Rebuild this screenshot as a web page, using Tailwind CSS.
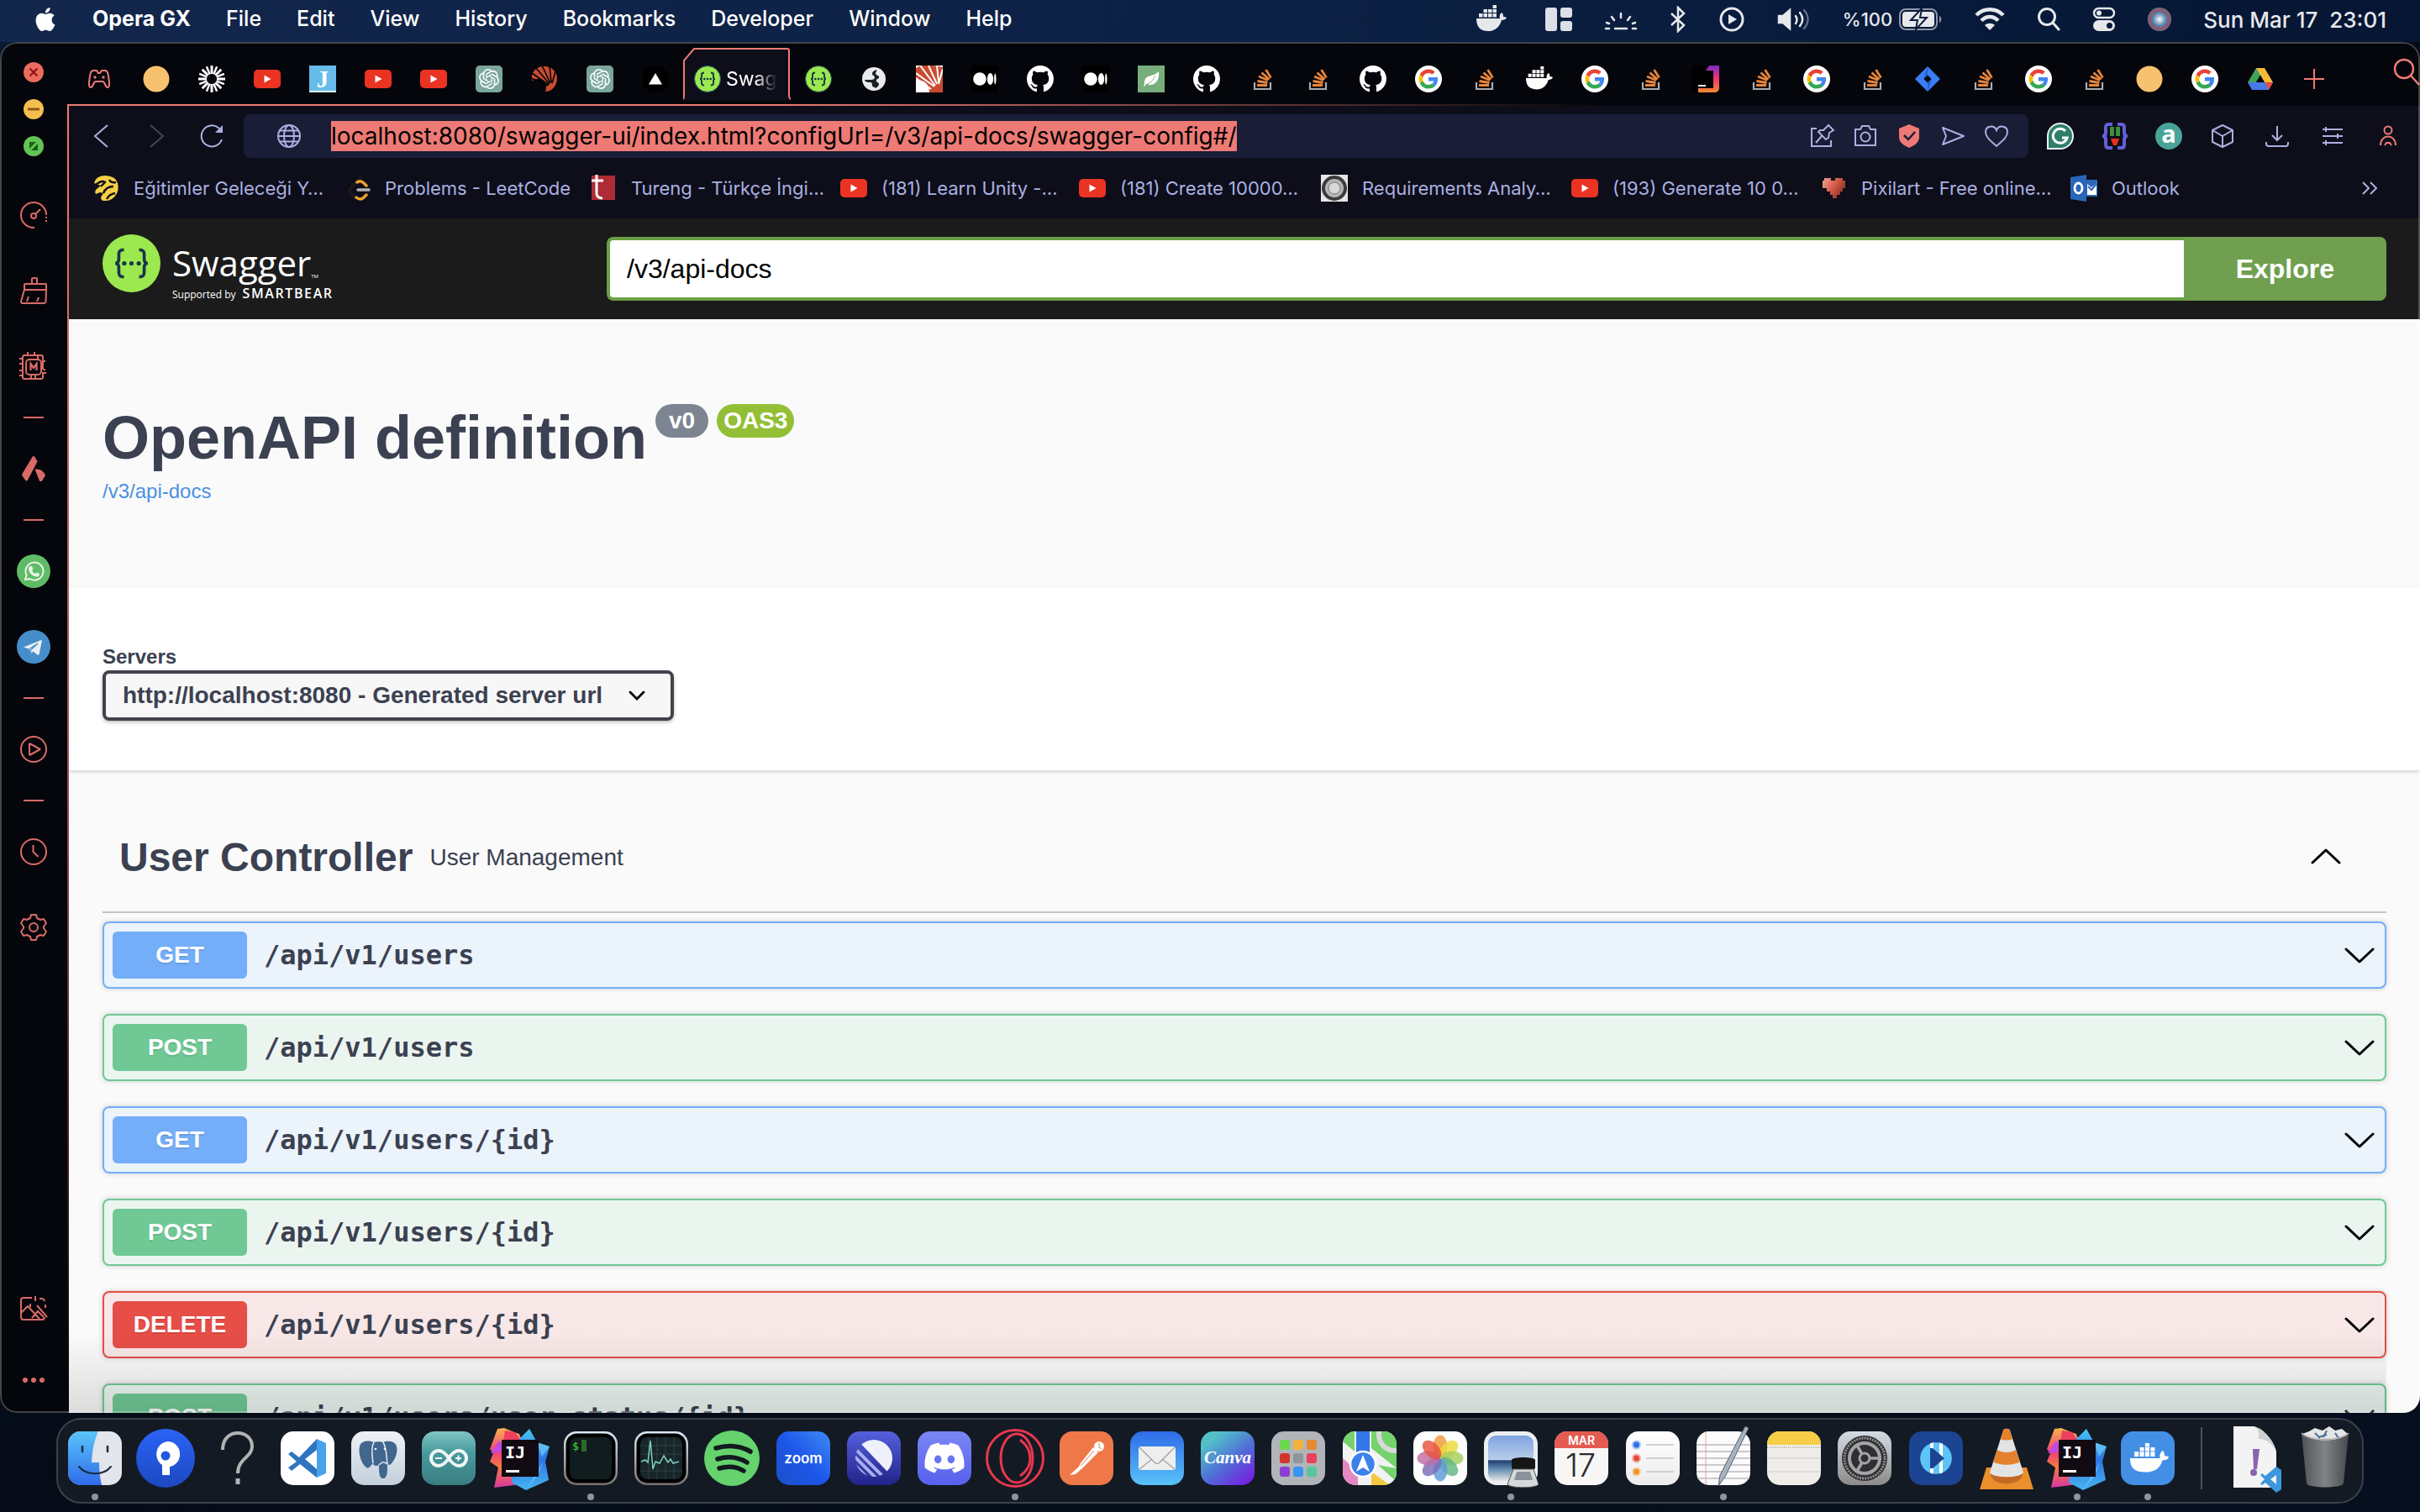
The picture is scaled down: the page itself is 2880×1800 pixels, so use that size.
<!DOCTYPE html>
<html lang="en">
<head>
<meta charset="utf-8">
<title>Swagger UI</title>
<script src="https://cdn.jsdelivr.net/npm/@tailwindcss/browser@4"></script>
</head>
<body class="flex h-screen flex-col overflow-hidden bg-gradient-to-br from-[#0a1c33] via-[#050c18] to-[#060f1e] font-[Inter,sans-serif]">

<svg class="absolute h-0 w-0" aria-hidden="true">
<defs>
<linearGradient id="gBlue" x2="0" y2="1"><stop stop-color="#5ac4fa"/><stop offset="1" stop-color="#2f6bea"/></linearGradient>
<linearGradient id="gMail" x2="0" y2="1"><stop stop-color="#2f6be8"/><stop offset="1" stop-color="#5ac3f8"/></linearGradient>
<linearGradient id="gSource" x2="0" y2="1"><stop stop-color="#2a63f6"/><stop offset="1" stop-color="#1d49c0"/></linearGradient>
<linearGradient id="gZoom" x1="1" x2="0" y2="1"><stop stop-color="#3f8af4"/><stop offset=".5" stop-color="#1d57ea"/><stop offset="1" stop-color="#1c4fc8"/></linearGradient>
<linearGradient id="gPale" x2="0" y2="1"><stop stop-color="#eef2f6"/><stop offset="1" stop-color="#c3cfdb"/></linearGradient>
<linearGradient id="gTeal" x2="0" y2="1"><stop stop-color="#82c4c4"/><stop offset=".4" stop-color="#469a9d"/><stop offset="1" stop-color="#3a7d80"/></linearGradient>
<linearGradient id="gRim" x2="0" y2="1"><stop stop-color="#dde9f7"/><stop offset="1" stop-color="#76716f"/></linearGradient>
<linearGradient id="gLinear" x2="0" y2="1"><stop stop-color="#5560dd"/><stop offset="1" stop-color="#22238a"/></linearGradient>
<linearGradient id="gDisc" x2="0" y2="1"><stop stop-color="#7b86f5"/><stop offset="1" stop-color="#5661ee"/></linearGradient>
<linearGradient id="gCanva" x2=".8" y2="1"><stop offset=".2" stop-color="#52bfc9"/><stop offset=".6" stop-color="#4f6fd6"/><stop offset="1" stop-color="#7422e0"/></linearGradient>
<linearGradient id="gIjL" x2="0" y2="1"><stop stop-color="#f9b34b"/><stop offset=".4" stop-color="#ee3f7e"/><stop offset=".65" stop-color="#f57c3a"/><stop offset="1" stop-color="#d736a6"/></linearGradient>
<linearGradient id="gIjR" x2="0" y2="1"><stop stop-color="#47c6f2"/><stop offset=".5" stop-color="#2e74e4"/><stop offset="1" stop-color="#45b5f0"/></linearGradient>
<linearGradient id="gPaper" x2="0" y2="1"><stop stop-color="#fff"/><stop offset="1" stop-color="#ececec"/></linearGradient>
<linearGradient id="gGear" x2="0" y2="1"><stop stop-color="#d3dbe3"/><stop offset="1" stop-color="#8d8b89"/></linearGradient>
<linearGradient id="gTrash" x2="1" y2="0"><stop stop-color="#55585b"/><stop offset=".5" stop-color="#8d9092"/><stop offset="1" stop-color="#4b4d50"/></linearGradient>
<linearGradient id="gSea" x2="0" y2="1"><stop stop-color="#7ea4df"/><stop offset=".54" stop-color="#b9cdec"/><stop offset=".55" stop-color="#1f3b6e"/><stop offset=".72" stop-color="#5b86ad"/><stop offset="1" stop-color="#e3e6e6"/></linearGradient>
<linearGradient id="gJb" x2="0" y2="1"><stop stop-color="#7c29c9"/><stop offset=".5" stop-color="#f0386b"/><stop offset="1" stop-color="#f58b32"/></linearGradient>
<radialGradient id="gSiri"><stop stop-color="#fff"/><stop offset=".3" stop-color="#9fb9d6"/><stop offset=".6" stop-color="#4d7fa0"/><stop offset=".85" stop-color="#a8456e"/><stop offset="1" stop-color="#4a8f80"/></radialGradient>
<linearGradient id="gHeart" x2="1" y2=".6"><stop stop-color="#f0a497"/><stop offset=".5" stop-color="#d9604c"/><stop offset="1" stop-color="#8c2f22"/></linearGradient>
</defs>

<!-- favicons -->
<symbol id="gx" viewBox="0 0 32 32"><path d="M9 6h4l2 3h2l2-3h4c3 0 3.500 3 4.500 10 .8 6 1 10-1.500 10-3 0-3-7-6-7h-8c-3 0-3 7-6 7C3.500 26 3.700 22 4.500 16 5.500 9 6 6 9 6Z" fill="none" stroke="#ee7a75" stroke-width="2"/><circle cx="11" cy="14" r="1.700" fill="#ee7a75"/><circle cx="21" cy="14" r="1.700" fill="#ee7a75"/></symbol>
<symbol id="sun" viewBox="0 0 32 32"><circle cx="16" cy="16" r="15.500" fill="#f6c26f"/></symbol>
<symbol id="burst" viewBox="0 0 32 32"><g stroke="#fff" stroke-width="3"><path d="M16 0v10M16 22v10M0 16h10M22 16h10M4.700 4.700l7 7M20.300 20.300l7 7M4.700 27.300l7-7M20.300 11.700l7-7"/></g><g stroke="#fff" stroke-width="2.400"><path d="M9.900 1.200l3.800 9.300M18.300 21.500l3.800 9.300M1.200 9.900l9.300 3.800M21.500 18.300l9.300 3.800M1.200 22.100l9.300-3.800M21.500 13.700l9.300-3.800M9.900 30.800l3.800-9.300M18.300 10.500l3.800-9.300"/></g></symbol>
<symbol id="yt" viewBox="0 0 32 32"><rect y="5" width="32" height="22" rx="5" fill="#ea3323"/><path d="M12.500 11.500v9l8-4.500Z" fill="#fff"/></symbol>
<symbol id="gpt" viewBox="0 0 32 32"><rect width="32" height="32" rx="5" fill="#7ba69b"/><path transform="translate(4 4)" fill="#fff" d="M22.2819 9.8211a5.9847 5.9847 0 0 0-.5157-4.9108 6.0462 6.0462 0 0 0-6.5098-2.9A6.0651 6.0651 0 0 0 4.9807 4.1818a5.9847 5.9847 0 0 0-3.9977 2.9 6.0462 6.0462 0 0 0 .7427 7.0966 5.98 5.98 0 0 0 .511 4.9107 6.051 6.051 0 0 0 6.5146 2.9001A5.9847 5.9847 0 0 0 13.2599 24a6.0557 6.0557 0 0 0 5.7718-4.2058 5.9894 5.9894 0 0 0 3.9977-2.9001 6.0557 6.0557 0 0 0-.7475-7.0729zm-9.022 12.6081a4.4755 4.4755 0 0 1-2.8764-1.0408l.1419-.0804 4.7783-2.7582a.7948.7948 0 0 0 .3927-.6813v-6.7369l2.02 1.1686a.071.071 0 0 1 .038.052v5.5826a4.504 4.504 0 0 1-4.4945 4.4944zm-9.6607-4.1254a4.4708 4.4708 0 0 1-.5346-3.0137l.142.0852 4.783 2.7582a.7712.7712 0 0 0 .7806 0l5.8428-3.3685v2.3324a.0804.0804 0 0 1-.0332.0615L9.74 19.9502a4.4992 4.4992 0 0 1-6.1408-1.6464zM2.3408 7.8956a4.485 4.485 0 0 1 2.3655-1.9728V11.6a.7664.7664 0 0 0 .3879.6765l5.8144 3.3543-2.0201 1.1685a.0757.0757 0 0 1-.071 0l-4.8303-2.7865A4.504 4.504 0 0 1 2.3408 7.872zm16.5963 3.8558L13.1038 8.364 15.1192 7.2a.0757.0757 0 0 1 .071 0l4.8303 2.7913a4.4944 4.4944 0 0 1-.6765 8.1042v-5.6772a.79.79 0 0 0-.407-.667zm2.0107-3.0231l-.142-.0852-4.7735-2.7818a.7759.7759 0 0 0-.7854 0L9.409 9.2297V6.8974a.0662.0662 0 0 1 .0284-.0615l4.8303-2.7866a4.4992 4.4992 0 0 1 6.6802 4.66zM8.3065 12.863l-2.02-1.1638a.0804.0804 0 0 1-.038-.0567V6.0742a4.4992 4.4992 0 0 1 7.3757-3.4537l-.142.0805L8.704 5.459a.7948.7948 0 0 0-.3927.6813zm1.0976-2.3654l2.602-1.4998 2.6069 1.4998v2.9994l-2.5974 1.4997-2.6067-1.4997Z"/></symbol>
<symbol id="shell" viewBox="0 0 32 32"><path d="M1 18C-1 7 8 0 16 1c9 0 15 7 15 14 0 9-6 16-14 16 2-5 1-9-2-12-4-4-9-4-13-1Z" fill="#c94c31"/><path d="M1 9l20 14M6 3l16 19M13 0l10 21M22 0l2 20M29 7l-4 14M0 15l20 9" stroke="#05060b" stroke-width="1.600"/></symbol>
<symbol id="sonar" viewBox="0 0 32 32"><path fill="#fff" d="M0 0h32v32H0z"/><path d="M0 3C10-3 22 0 32 2v30H16C16 22 10 17 0 17Z" fill="#c94c31"/><path d="M0 9l22 16M5 0l18 24M15 0l10 22M25 0l2 20M0 15l18 13M32 4l-5 18" stroke="#fff" stroke-width="2"/></symbol>
<symbol id="tri" viewBox="0 0 32 32"><circle cx="16" cy="16" r="16" fill="#000"/><path d="M16 9l8 13.500H8Z" fill="#fff"/></symbol>
<symbol id="swag" viewBox="0 0 32 32"><circle cx="16" cy="16" r="15.500" fill="#9ce84f" stroke="#24585a"/><path d="M12 8.500c-2.500 0-3 .8-3 2.500v2.600c0 1.400-.7 2.400-2 2.400 1.300 0 2 1 2 2.400V21c0 1.700.5 2.500 3 2.500M20 8.500c2.500 0 3 .8 3 2.500v2.600c0 1.400.7 2.400 2 2.400-1.300 0-2 1-2 2.400V21c0 1.700-.5 2.500-3 2.500" fill="none" stroke="#173647" stroke-width="1.900"/><g fill="#173647"><circle cx="12.300" cy="16" r="1.300"/><circle cx="16" cy="16" r="1.300"/><circle cx="19.700" cy="16" r="1.300"/></g></symbol>
<symbol id="earth" viewBox="0 0 32 32"><circle cx="16" cy="16" r="14" fill="#e8eaed"/><path d="M19 5c-2 1-5 2-5 5 0 2 3 2 3 4s-2 3-4 3H5c1 3 3 3 6 3s3 2 3 4 3 1 4 3c2-1 4-3 4-5s-4-2-3-5c1-1 4-2 3-4-1-2-4-1-4-4 0-1 2-2 1-4Z" fill="#1c1e22"/></symbol>
<symbol id="medium" viewBox="0 0 32 32"><rect width="32" height="32" rx="3" fill="#000"/><circle cx="10" cy="16" r="7.800" fill="#fff"/><ellipse cx="22.500" cy="16" rx="3.600" ry="7" fill="#fff"/><ellipse cx="28.300" cy="16" rx="1.200" ry="6.400" fill="#fff"/></symbol>
<symbol id="github" viewBox="0 0 16 16"><path fill="#fff" d="M8 0C3.580 0 0 3.580 0 8c0 3.540 2.290 6.530 5.470 7.590.4.070.55-.17.55-.38 0-.19-.01-.82-.01-1.490-2.010.37-2.530-.49-2.690-.94-.09-.23-.48-.94-.82-1.130-.28-.15-.68-.52-.01-.53.63-.01 1.080.58 1.230.82.72 1.210 1.870.87 2.330.66.070-.52.28-.87.51-1.070-1.780-.2-3.640-.89-3.640-3.950 0-.87.31-1.590.82-2.150-.08-.2-.36-1.020.08-2.120 0 0 .67-.21 2.200.82.64-.18 1.320-.27 2-.27.68 0 1.360.09 2 .27 1.530-1.040 2.200-.82 2.200-.82.44 1.100.16 1.920.08 2.120.51.56.82 1.270.82 2.150 0 3.070-1.870 3.750-3.650 3.950.29.25.54.73.54 1.480 0 1.070-.01 1.930-.01 2.200 0 .21.15.46.55.38A8.013 8.013 0 0016 8c0-4.420-3.580-8-8-8z"/></symbol>
<symbol id="leaf" viewBox="0 0 32 32"><path fill="#77ae7b" d="M0 0h32v32H0z"/><path d="M25 7c1 9-3 16-10 16-2 0-4-1-5-1l-2 3-1-1c1-2 1-3 1-5 1-8 9-6 13-9 2-1 3-2 4-3Z" fill="#fff"/><path d="M9 23c6-2 10-6 12-11" stroke="#77ae7b" fill="none"/></symbol>
<symbol id="so" viewBox="0 0 32 32"><path d="M7 20v8h19v-8" fill="none" stroke="#a9abb0" stroke-width="2.200"/><g stroke="#e8853a" stroke-width="2.800"><path d="M10 23.500h12M10.500 18.500l12 2M12 13l11 4.500M15.500 8.500l9 8M20.500 5l6 9.500"/></g></symbol>
<symbol id="google" viewBox="0 0 32 32"><circle cx="16" cy="16" r="16" fill="#fff"/><g transform="translate(4.500 4.500) scale(.48)"><path fill="#EA4335" d="M24 9.500c3.540 0 6.710 1.220 9.210 3.600l6.850-6.850C35.900 2.380 30.470 0 24 0 14.620 0 6.510 5.380 2.560 13.220l7.980 6.190C12.430 13.720 17.740 9.500 24 9.500z"/><path fill="#4285F4" d="M46.980 24.550c0-1.570-.15-3.090-.38-4.550H24v9.020h12.940c-.58 2.960-2.260 5.480-4.780 7.180l7.730 6c4.510-4.180 7.090-10.360 7.090-17.650z"/><path fill="#FBBC05" d="M10.530 28.590c-.48-1.450-.76-2.990-.76-4.590s.27-3.140.76-4.590l-7.980-6.190C.92 16.460 0 20.120 0 24c0 3.880.92 7.540 2.560 10.780l7.970-6.190z"/><path fill="#34A853" d="M24 48c6.480 0 11.930-2.130 15.890-5.810l-7.730-6c-2.150 1.450-4.920 2.300-8.160 2.300-6.260 0-11.570-4.220-13.470-9.910l-7.980 6.190C6.510 42.620 14.620 48 24 48z"/></g></symbol>
<symbol id="whale" viewBox="0 0 36 32" overflow="visible"><path d="M0 15h28c-1-3 0-5 2-7 2 1 2 3 2 5 1 0 3 0 4 1-1 2-3 3-6 3-2 8-8 13-16 13C4 30 0 24 0 15Z"/><path d="M3 9h4.500v4.500H3zM8.500 9H13v4.500H8.500zM14 9h4.500v4.500H14zM19.500 9H24v4.500h-4.500zM8.500 4H13v4H8.500zM14 4h4.500v4H14zM19.500 4H24v4h-4.500zM19.500-1H24v4h-4.500z"/></symbol>
<symbol id="jb" viewBox="0 0 32 32"><rect width="32" height="32" rx="3" fill="#000"/><path d="M16 6h9v21H7v5h19c4 0 6-2 6-6V0H20Z" fill="url(#gJb)"/><path fill="#fff" d="M7 23h9v2H7z"/></symbol>
<symbol id="jira" viewBox="0 0 32 32"><path d="M16 1l15 15-15 15L1 16Z" fill="#3b7df3"/><path d="M16 1v10l-5 5L16 1ZM16 31V21l5-5Z" fill="#1f5fd3"/><path d="M16 11.500l4.500 4.500-4.500 4.500-4.500-4.500Z" fill="#05060b"/></symbol>
<symbol id="drive" viewBox="0 0 32 32"><path d="M11 3h10L6 28l-5-8Z" fill="#3fa258"/><path d="M11 3h10l10 17H21Z" fill="#f6b93b"/><path d="M1 20h30l-5 9H6Z" fill="#4679ea"/><path d="M21 20h10l-5 9Z" fill="#dd4f43"/><path d="M16 12l5 8H11Z" fill="#05060b"/></symbol>
<symbol id="globe" viewBox="0 0 32 32"><g fill="none" stroke="#abb0e0" stroke-width="2"><circle cx="16" cy="16" r="13"/><ellipse cx="16" cy="16" rx="6" ry="13"/><path d="M3 16h26M5 9.500h22M5 22.500h22"/></g></symbol>

<!-- dock apps -->
<symbol id="finder" viewBox="0 0 64 64"><clipPath id="cF"><rect width="64" height="64" rx="15"/></clipPath><g clip-path="url(#cF)"><path fill="#e3e5ec" d="M0 0h64v64H0z"/><path d="M0 0h36c-5 11-7 22-8 37h9c0 10 1 18 3 27H0Z" fill="url(#gBlue)"/></g><path d="M17 18v6M47 18v6" stroke="#1c2a3c" stroke-width="2.500" stroke-linecap="round"/><path d="M13 42c9 11 29 11 38 0" fill="none" stroke="#1c2a3c" stroke-width="2" stroke-linecap="round"/></symbol>
<symbol id="source" viewBox="0 0 64 64" overflow="visible"><circle cx="32" cy="32" r="35" fill="url(#gSource)"/><path d="M28 52V40a14 15 0 1 1 9 2v10Z" fill="#fff"/><circle cx="32" cy="29" r="5.500" fill="#2358dd"/></symbol>
<symbol id="quest" viewBox="0 0 64 64"><path d="M15 22C15 8 24 2 33 2s17 6 17 16c0 13-17 14-17 32" fill="none" stroke="#b3b3b3" stroke-width="4"/><path fill="#b3b3b3" d="M30.500 56h5v7h-5z"/></symbol>
<symbol id="vscode" viewBox="0 0 64 64"><rect width="64" height="64" rx="15" fill="#fff"/><path d="M43 9L22 31 13 24l-4 3 10 9L9 43l4 4 10-8 20 16Z" fill="#2f74c0"/><path d="M43 22L29 33l14 12Z" fill="#fff"/><path d="M43 9l11 5v36l-11 5Z" fill="#4aa3ea"/></symbol>
<symbol id="pg" viewBox="0 0 64 64"><rect width="64" height="64" rx="15" fill="url(#gPale)"/><path d="M10 18c2-8 12-7 17-5 3-1 8-1 11 0 5-2 14-2 16 5 2 8-3 18-8 22l-3-1c0 9 0 17-5 17s-5-8-5-16c-3 2-7 1-7-2-3 3-5 7-8 5C12 39 8 26 10 18Z" fill="#41678f"/><path d="M27 13c-4 6-2 17-1 25M38 13c4 6 4 18 5 26M33 40c3-3 5-5 10-1" fill="none" stroke="#e6ebf0" stroke-width="1.500"/><circle cx="29" cy="21" r="1.300" fill="#fff"/><circle cx="40" cy="21" r="1.300" fill="#fff"/></symbol>
<symbol id="arduino" viewBox="0 0 64 64"><rect width="64" height="64" rx="15" fill="url(#gTeal)"/><path d="M32 32c-4-6-8-9-12-9a9 9 0 0 0 0 18c4 0 8-3 12-9s8-9 12-9a9 9 0 0 1 0 18c-4 0-8-3-12-9Z" fill="none" stroke="#f1f5f5" stroke-width="4"/><path d="M16 32h8M40 32h7M43.500 28.500v7" stroke="#f1f5f5" stroke-width="2"/></symbol>
<symbol id="activity" viewBox="0 0 64 64"><rect width="64" height="64" rx="15" fill="url(#gRim)"/><rect x="2.500" y="2.500" width="59" height="59" rx="13" fill="#000"/><rect x="7" y="7" width="50" height="50" rx="8" fill="#17262a"/><path d="M17 7v50M27 7v50M37 7v50M47 7v50M7 17h50M7 27h50M7 47h50" stroke="#3c5555" stroke-opacity=".6"/><path d="M8 36l5-2 3 3 3-26 3 34 3-9 5 2 5-9 5 8 3-4 3 5 7-2" fill="none" stroke="#7fd0bf" stroke-width="1.500"/></symbol>
<symbol id="spotify" viewBox="0 0 64 64" overflow="visible"><circle cx="32" cy="32" r="33" fill="#65d26e"/><path d="M13 20c14-4 29-3 41 4M15 33c13-4 25-2 35 4M17 44c11-3 21-2 29 3" fill="none" stroke="#121a1f" stroke-width="5.500" stroke-linecap="round"/></symbol>
<symbol id="linear" viewBox="0 0 64 64"><rect width="64" height="64" rx="15" fill="url(#gLinear)"/><clipPath id="cL"><circle cx="32" cy="32" r="22"/></clipPath><g clip-path="url(#cL)"><path d="M12 10h44v40h-6Z" fill="#eef0fc"/><path d="M6 17l48 48M4 25l44 44M2 33l40 40" stroke="#a9aff0" stroke-width="4"/></g></symbol>
<symbol id="discord" viewBox="0 0 64 64"><rect width="64" height="64" rx="15" fill="url(#gDisc)"/><path transform="translate(8.500 8) scale(1.960)" fill="#fff" d="M20.317 4.3698a19.7913 19.7913 0 00-4.8851-1.5152.0741.0741 0 00-.0785.0371c-.211.3753-.4447.8648-.6083 1.2495-1.8447-.2762-3.68-.2762-5.4868 0-.1636-.3933-.4058-.8742-.6177-1.2495a.077.077 0 00-.0785-.037 19.7363 19.7363 0 00-4.8852 1.515.0699.0699 0 00-.0321.0277C.5334 9.0458-.319 13.5799.0992 18.0578a.0824.0824 0 00.0312.0561c2.0528 1.5076 4.0413 2.4228 5.9929 3.0294a.0777.0777 0 00.0842-.0276c.4616-.6304.8731-1.2952 1.226-1.9942a.076.076 0 00-.0416-.1057c-.6528-.2476-1.2743-.5495-1.8722-.8923a.077.077 0 01-.0076-.1277c.1258-.0943.2517-.1923.3718-.2914a.0743.0743 0 01.0776-.0105c3.9278 1.7933 8.18 1.7933 12.0614 0a.0739.0739 0 01.0785.0095c.1202.099.246.1981.3728.2924a.077.077 0 01-.0066.1276 12.2986 12.2986 0 01-1.873.8914.0766.0766 0 00-.0407.1067c.3604.698.7719 1.3628 1.225 1.9932a.076.076 0 00.0842.0286c1.961-.6067 3.9495-1.5219 6.0023-3.0294a.077.077 0 00.0313-.0552c.5004-5.177-.8382-9.6739-3.5485-13.6604a.061.061 0 00-.0312-.0286zM8.02 15.3312c-1.1825 0-2.1569-1.0857-2.1569-2.419 0-1.3332.9555-2.4189 2.157-2.4189 1.2108 0 2.1757 1.0952 2.1568 2.419 0 1.3332-.9555 2.4189-2.1569 2.4189zm7.9748 0c-1.1825 0-2.1569-1.0857-2.1569-2.419 0-1.3332.9554-2.4189 2.1569-2.4189 1.2108 0 2.1757 1.0952 2.1568 2.419 0 1.3332-.946 2.4189-2.1568 2.4189Z"/></symbol>
<symbol id="opera" viewBox="0 0 64 64" overflow="visible"><g fill="none" stroke="#e8374f"><circle cx="32" cy="32" r="33.500" stroke-width="3"/><ellipse cx="34" cy="32" rx="19" ry="29" stroke-width="3"/><path d="M38 10c16 12 16 32 0 43" stroke-width="3"/></g></symbol>
<symbol id="postman" viewBox="0 0 64 64"><rect width="64" height="64" rx="15" fill="#ee7847"/><circle cx="47" cy="18" r="6" fill="#fff"/><path d="M40 19l6 6-18 18-5 1 1-5Z" fill="#fff"/><path d="M24 41l-12 11 7-1 9-8Z" fill="#fff"/><path d="M41 23L25 41M47 14v5l3 2" stroke="#ee7847" fill="none"/></symbol>
<symbol id="mail" viewBox="0 0 64 64"><rect width="64" height="64" rx="15" fill="url(#gMail)"/><rect x="10" y="18" width="44" height="28" rx="3" fill="#eeeeee"/><path d="M11 19l18 18c2 2 4 2 6 0l18-18M11 45l15-12M53 45L38 33" fill="none" stroke="#a7a7a7" stroke-width="1.500"/></symbol>
<symbol id="launch" viewBox="0 0 64 64"><rect width="64" height="64" rx="15" fill="#b1b5ba"/><g><rect x="10" y="10" width="12" height="12" rx="3" fill="#68d94b"/><rect x="26" y="10" width="12" height="12" rx="3" fill="#f2b43c"/><rect x="42" y="10" width="12" height="12" rx="3" fill="#e48a2f"/><rect x="10" y="26" width="12" height="12" rx="3" fill="#d2362b"/><rect x="26" y="26" width="12" height="12" rx="3" fill="#8f959b"/><rect x="42" y="26" width="12" height="12" rx="3" fill="#ea4159"/><rect x="10" y="42" width="12" height="12" rx="3" fill="#8a3fd0"/><rect x="26" y="42" width="12" height="12" rx="3" fill="#3796ef"/><rect x="42" y="42" width="12" height="12" rx="3" fill="#56c79c"/></g></symbol>
<symbol id="maps" viewBox="0 0 64 64"><clipPath id="cM"><rect width="64" height="64" rx="15"/></clipPath><g clip-path="url(#cM)"><path fill="#f1f2f2" d="M0 0h64v64H0z"/><path fill="#75d36d" d="M0 0h14v24L0 12ZM34 0h30v44L34 20Z"/><circle cx="62" cy="4" r="19" fill="none" stroke="#d8d9dc" stroke-width="6"/><path fill="#e587c3" d="M0 32l18 16v16H0Z"/><path fill="#f5c93f" d="M34 64V48l22 16Z"/><path fill="#75d36d" d="M42 40l22 20V44Z"/><path fill="#3277e8" d="M16 0h16v30H16z"/></g><circle cx="24" cy="39" r="15" fill="#3b82ec" stroke="#fff" stroke-width="2.500"/><path d="M24 28l8 20-8-5-8 5Z" fill="#fff"/></symbol>
<symbol id="photos" viewBox="0 0 64 64"><rect width="64" height="64" rx="15" fill="#fdfdfd"/><g fill-opacity=".82"><ellipse cx="32" cy="18" rx="8.500" ry="13.500" fill="#f09a37"/><ellipse cx="32" cy="18" rx="8.500" ry="13.500" fill="#eddc3d" transform="rotate(45 32 32)"/><ellipse cx="32" cy="18" rx="8.500" ry="13.500" fill="#a4cf5e" transform="rotate(90 32 32)"/><ellipse cx="32" cy="18" rx="8.500" ry="13.500" fill="#62b684" transform="rotate(135 32 32)"/><ellipse cx="32" cy="18" rx="8.500" ry="13.500" fill="#5d9bd8" transform="rotate(180 32 32)"/><ellipse cx="32" cy="18" rx="8.500" ry="13.500" fill="#7b6cb8" transform="rotate(225 32 32)"/><ellipse cx="32" cy="18" rx="8.500" ry="13.500" fill="#c26da5" transform="rotate(270 32 32)"/><ellipse cx="32" cy="18" rx="8.500" ry="13.500" fill="#e8523f" transform="rotate(315 32 32)"/></g></symbol>
<symbol id="preview" viewBox="0 0 64 64" overflow="visible"><rect width="64" height="64" rx="15" fill="#eceef0"/><rect x="5" y="5" width="54" height="54" rx="9" fill="url(#gSea)"/><path d="M33 34c0-4 28-4 28 0v10c0 2-28 2-28 0Z" fill="#151515"/><path d="M35 45h24l6 18c-3 5-34 5-37 0Z" fill="#d4d9db" stroke="#555"/><path d="M39 48h16l3 10H36Z" fill="#8a939a"/></symbol>
<symbol id="remind" viewBox="0 0 64 64"><rect width="64" height="64" rx="15" fill="url(#gPaper)"/><path d="M24 16h33M24 32h33M24 48h33" stroke="#c5c5c8" stroke-width="1.500"/><circle cx="12.500" cy="16" r="4.500" fill="#2e6fe8" stroke="#a9c5f7" stroke-width="2"/><circle cx="12.500" cy="32" r="4.500" fill="#e34a3d" stroke="#f3b0aa" stroke-width="2"/><circle cx="12.500" cy="48" r="4.500" fill="#ea9532" stroke="#f6d1a0" stroke-width="2"/></symbol>
<symbol id="textedit" viewBox="0 0 64 64" overflow="visible"><rect width="64" height="64" rx="15" fill="#fbfbfb"/><path d="M0 16h64M0 24h64M0 32h64M0 40h64M0 48h64M1 56h62" stroke="#bcbcc0" stroke-width="1.300"/><path d="M11 0v64" stroke="#eaa0a0"/><path d="M58-6l4 2-28 58-8 11 2-13Z" fill="#a6b4c2" stroke="#56616d"/></symbol>
<symbol id="notes" viewBox="0 0 64 64"><clipPath id="cN"><rect width="64" height="64" rx="15"/></clipPath><g clip-path="url(#cN)"><path fill="#eeede9" d="M0 0h64v64H0z"/><path fill="#f7cd47" d="M0 0h64v16H0z"/><path d="M0 19h64" stroke="#b7b3aa" stroke-dasharray="1 1.500" stroke-width="2"/><path d="M0 32h64M0 48h64" stroke="#cfcdc8"/></g></symbol>
<symbol id="prefs" viewBox="0 0 64 64"><rect width="64" height="64" rx="15" fill="url(#gGear)"/><circle cx="32" cy="32" r="27" fill="#2f2f31"/><circle cx="32" cy="32" r="24" fill="none" stroke="#8f9193" stroke-width="3" stroke-dasharray="2 1.200"/><circle cx="32" cy="32" r="18" fill="none" stroke="#a2a4a6" stroke-width="4"/><circle cx="32" cy="32" r="6" fill="none" stroke="#a2a4a6" stroke-width="3"/><path d="M38 32h14M29 27l-7-12M29 37l-7 12" stroke="#a2a4a6" stroke-width="3.500"/></symbol>
<symbol id="anchor" viewBox="0 0 64 64"><rect width="64" height="64" rx="15" fill="#1b4592"/><clipPath id="cA"><circle cx="32" cy="32" r="19"/></clipPath><g clip-path="url(#cA)"><circle cx="32" cy="32" r="19" fill="#5dc4f7"/><path d="M27 12v40M38 12v40" stroke="#fff" stroke-width="4"/></g><path d="M25 20h3l14 12-14 12h-3Z" fill="#1b4592"/></symbol>
<symbol id="vlc" viewBox="0 0 64 64" overflow="visible"><path d="M8 43h48l8 26H0Z" fill="#ea8f2c"/><path d="M13 52c4 14 34 14 38 0l-5-14H18Z" fill="#c56a22"/><path d="M28-1c0-3 8-3 8 0l16 50c-4 7-36 7-40 0Z" fill="#e2e4e6"/><path d="M28-1c0-3 8-3 8 0l3 10c-3 2-11 2-14 0ZM21 22c5 4 17 4 22 0l5 14c-7 5-25 5-32 0Z" fill="#e3812c"/></symbol>
<symbol id="docker" viewBox="0 0 64 64"><rect width="64" height="64" rx="15" fill="#438fe6"/><g transform="translate(11 14) scale(1.280)" fill="#fff"><path d="M0 14h28c-1-3 0-5 2-7 2 1 2 3 2 5 1 0 3 0 4 1-1 2-3 3-6 3-2 8-8 11-16 11C4 27 0 23 0 14Z"/><path d="M4 8h4v4.500H4zM9 8h4v4.500H9zM14 8h4v4.500h-4zM19 8h4v4.500h-4zM9 4h4v3.500H9zM14 4h4v3.500h-4zM19 4h4v3.500h-4zM14 0h4v3.500h-4z"/></g></symbol>
<symbol id="doc" viewBox="0 0 64 64" overflow="visible"><path d="M7-6h24c13 3 24 18 27 30v43H7Z" fill="#f3f3f3"/><path d="M31-6c8 4 6 12 6 15 8-1 17 6 21 15C55 12 44-3 31-6Z" fill="#cfcfcf"/><path d="M30 21h8l-3 24h-4Z" fill="#8b63ad"/><circle cx="31" cy="49" r="4" fill="#8b63ad"/><path d="M58 42l6 4v23l-6 4-13-12-4 3-2-2 5-5-5-5 2-2 4 3 13-11Z" fill="#3c97dd"/><path d="M58 52v11l-7-6Z" fill="#f3f3f3"/></symbol>
<symbol id="trash" viewBox="0 0 64 64" overflow="visible"><path d="M4 2h56l-6 60c-2 6-42 6-44 0Z" fill="url(#gTrash)" fill-opacity=".9"/><path d="M5 3c10 10 44 10 54 0L52-3l-8 2-7-5-8 5-9-3-7 4Z" fill="#e5e5e5"/><path d="M20 2l6 6M34-1l-4 8M44 2l4 6M24 7l10-3" stroke="#4c6f9e" stroke-width="2"/><path d="M4 2c8 10 48 10 56 0" fill="none" stroke="#a9abad" stroke-width="1.500"/></symbol>
</svg>

<!-- system menu bar -->
<header class="flex h-[50px] shrink-0 items-center justify-between bg-gradient-to-r from-[#13264c] via-[#0c2145] to-[#061633] pb-1 pr-10 pl-10 text-[25px] font-medium text-white">
  <nav class="flex items-center gap-[42px]">
    <svg class="h-[30px] w-7" viewBox="0 0 24 24" fill="#fff"><path d="M12.152 6.896c-.948 0-2.415-1.078-3.960-1.040-2.040.027-3.910 1.183-4.961 3.014-2.117 3.675-.546 9.103 1.519 12.090 1.013 1.454 2.208 3.090 3.792 3.039 1.520-.065 2.090-.987 3.935-.987 1.831 0 2.350.987 3.960.948 1.637-.026 2.676-1.480 3.676-2.948 1.156-1.688 1.636-3.325 1.662-3.415-.039-.013-3.182-1.221-3.220-4.857-.026-3.040 2.480-4.494 2.597-4.559-1.429-2.090-3.623-2.324-4.390-2.376-2-.156-3.675 1.090-4.610 1.090zM15.530 3.830c.843-1.012 1.400-2.427 1.245-3.830-1.207.052-2.662.805-3.532 1.818-.780.896-1.454 2.338-1.273 3.714 1.338.104 2.715-.688 3.559-1.701"/></svg>
    <span class="font-bold">Opera GX</span><span>File</span><span>Edit</span><span>View</span><span>History</span><span>Bookmarks</span><span>Developer</span><span>Window</span><span>Help</span>
  </nav>
  <div class="flex items-center gap-[38px] text-[#e6e8ec]">
    <svg class="h-8 w-9" viewBox="0 0 36 32" fill="#e6e8ec" overflow="visible"><use href="#whale"/></svg>
    <svg class="ml-2 h-8 w-8" viewBox="0 0 32 32" fill="#dcdfe5"><rect y="2" width="14" height="28" rx="3"/><rect x="18" y="2" width="14" height="12" rx="3"/><rect x="18" y="18" width="14" height="12" rx="3"/></svg>
    <svg class="h-8 w-10" viewBox="0 0 40 32" stroke="#e6e8ec" stroke-width="2.500" stroke-linecap="round"><path d="M2 27h4M13 27h14M34 27h4M20 9v5M9 13l3 4M31 13l-3 4M3 20l3 1M37 20l-3 1"/></svg>
    <svg class="h-8 w-5" viewBox="0 0 20 32" fill="none" stroke="#e6e8ec" stroke-width="2.500"><path d="M2 9l15 14-7 7V2l7 7L2 23"/></svg>
    <svg class="h-8 w-8" viewBox="0 0 32 32"><circle cx="16" cy="16" r="13" fill="none" stroke="#e6e8ec" stroke-width="3"/><path d="M12 10v12l10-6Z" fill="#e6e8ec"/></svg>
    <svg class="h-8 w-10" viewBox="0 0 40 32" fill="none" stroke="#e6e8ec" stroke-width="2.500" stroke-linecap="round"><path d="M2 12h5l8-7v22l-8-7H2Z" fill="#e6e8ec"/><path d="M22 12c2 3 2 6 0 9M27 8c4 5 4 11 0 16"/><path d="M32 5c6 7 6 15 0 22" stroke-opacity=".4"/></svg>
    <div class="flex items-center gap-2"><span class="text-[22px]">%100</span>
    <svg class="h-8 w-[52px]" viewBox="0 0 52 32"><rect x="1" y="4" width="44" height="24" rx="7" fill="none" stroke="#8f98a9" stroke-width="2"/><rect x="4" y="7" width="38" height="18" rx="4" fill="#e6e8ec"/><path d="M26 4L14 17h8l-2 11 13-14h-8l2-10Z" fill="#e6e8ec" stroke="#0a1a38" stroke-width="2"/><path d="M48 12c3 1 3 7 0 8Z" fill="#8f98a9"/></svg></div>
    <svg class="h-8 w-9" viewBox="0 0 36 32" fill="none" stroke="#e6e8ec" stroke-width="4.500"><path d="M2 11c9-9 23-9 32 0M8 17.500c6-6 14-6 20 0"/><path d="M18 29l-6-6c3-3 9-3 12 0Z" fill="#e6e8ec" stroke="none"/></svg>
    <svg class="h-8 w-7" viewBox="0 0 28 32" fill="none" stroke="#e6e8ec" stroke-width="3" stroke-linecap="round"><circle cx="12" cy="13" r="9.500"/><path d="M19 20l7 8"/></svg>
    <svg class="h-8 w-7" viewBox="0 0 28 32"><rect x="2" y="3" width="24" height="11" rx="5.500" fill="none" stroke="#e6e8ec" stroke-width="2.500"/><circle cx="8" cy="8.500" r="3" fill="#e6e8ec"/><rect x="1" y="17" width="26" height="13" rx="6.500" fill="#e6e8ec"/><circle cx="20.500" cy="23.500" r="3.500" fill="#0a1a38"/></svg>
    <svg class="h-8 w-7" viewBox="0 0 28 32"><circle cx="14" cy="16" r="14" fill="url(#gSiri)"/></svg>
    <time class="whitespace-pre text-[26px]">Sun Mar 17  23:01</time>
  </div>
</header>

<!-- browser window -->
<div class="relative flex min-h-0 flex-1 overflow-hidden rounded-[20px] bg-[#05060b]">
  <aside class="flex w-20 shrink-0 flex-col items-center pt-[14px]">
    <button aria-label="Close" class="grid h-11 place-items-center"><svg class="size-6" viewBox="0 0 24 24"><circle cx="12" cy="12" r="12" fill="#ec6a5e"/><path d="M7.500 7.500l9 9M16.500 7.500l-9 9" stroke="#8c1a10" stroke-width="2.400"/></svg></button>
    <button aria-label="Minimize" class="grid h-11 place-items-center"><svg class="size-6" viewBox="0 0 24 24"><circle cx="12" cy="12" r="12" fill="#f4bf4f"/><path d="M5 12h14" stroke="#8e5a1d" stroke-width="3"/></svg></button>
    <button aria-label="Full screen" class="mb-[15px] grid h-11 place-items-center"><svg class="size-6" viewBox="0 0 24 24"><circle cx="12" cy="12" r="12" fill="#61c454"/><path d="M7 15V7h8ZM17 9v8H9Z" fill="#19610f"/></svg></button>
    <button aria-label="GX Control" class="grid h-[90px] place-items-center"><svg class="size-9" viewBox="0 0 36 36" fill="none" stroke="#d96b67" stroke-width="2"><path d="M19 33A15 15 0 1 1 33 18"/><path d="M33 20v8" stroke-dasharray="2 2"/><circle cx="18" cy="19" r="3"/><path d="M20 17l6-6"/></svg></button>
    <button aria-label="GX Cleaner" class="grid h-[90px] place-items-center"><svg class="size-9" viewBox="0 0 36 36" fill="none" stroke="#d96b67" stroke-width="2" stroke-linejoin="round"><path d="M16 10V4q0-1 1-1h4q1 0 1 1v6M7 17v-6q0-1 1-1h24q1 0 1 1v6M6 17h27M7 17L3 31q0 2 2 2h25q2 0 2.500-2L33 17M10 31l2-6M22 31l2-5"/></svg></button>
    <button aria-label="Hot Tabs Killer" class="grid h-[90px] place-items-center"><svg class="size-9" viewBox="0 0 36 36" fill="none" stroke="#d96b67" stroke-width="2"><path d="M32 12h-3V7q0-2-2-2H7Q5 5 5 7v24q0 2 2 2h20q2 0 2-2v-5h4M29 12v9l3 2"/><rect x="9" y="10" width="18" height="18" rx="4"/><path d="M11 5V1M19 5V1M1 9h4M1 15h4M1 23h4M1 29h4M15 28v5M20 28v5M23 5v5"/><path d="M14.500 23v-8l3.500 5 3.500-5v8" stroke-width="2.200"/></svg></button>
    <span class="grid h-8 place-items-center"><i class="block h-0.5 w-6 bg-[#d96b67]"></i></span>
    <button aria-label="Aria" class="grid h-[90px] place-items-center"><svg class="size-9" viewBox="0 0 36 36" fill="#d96b67"><path d="M16.500 4q1.500-2 3 0l3 5.500L11 31.500q-1.500 2-3 0l-3.500-5q-.8-1 0-2.500ZM19.500 18.500q9.500-1 12.500 7.500l-4 6.500q-1.500 1.500-3 0Z"/></svg></button>
    <span class="grid h-8 place-items-center"><i class="block h-0.5 w-6 bg-[#d96b67]"></i></span>
    <button aria-label="WhatsApp" class="grid h-[90px] place-items-center"><svg class="size-10" viewBox="0 0 40 40"><circle cx="20" cy="20" r="20" fill="#5fbb66"/><path d="M10 30l1.500-5.500A10.500 10.500 0 1 1 15.500 29Z" fill="none" stroke="#e9f5ea" stroke-width="2"/><path d="M16 14l2 0 1.500 3.500-1.500 1.500c1 2 2 3 4 4l1.500-1.500 3.500 1.500c0 3-2 4-4 3.500-5-1-8-4-9-8.500 0-2 .5-3.500 2-4Z" fill="#e9f5ea"/></svg></button>
    <button aria-label="Telegram" class="grid h-[90px] place-items-center"><svg class="size-10" viewBox="0 0 40 40"><circle cx="20" cy="20" r="20" fill="#468ec9"/><path d="M8 20.500L29 12q1 0 .8 1.500L26.500 29q-.5 1.500-2 .5l-5-4-3 3-1.500-6Z" fill="#eceff2"/><path d="M15 22.500l10-6.500-8.500 8v4" fill="none" stroke="#468ec9" stroke-width="1.200"/></svg></button>
    <span class="grid h-8 place-items-center"><i class="block h-0.5 w-6 bg-[#d96b67]"></i></span>
    <button aria-label="Player" class="grid h-[90px] place-items-center"><svg class="size-9" viewBox="0 0 36 36" fill="none" stroke="#d96b67" stroke-width="2"><circle cx="18" cy="18" r="15"/><path d="M13 12v12q0 1 1 .5l11-6q1-.5 0-1l-11-6q-1-.5-1 .5Z"/></svg></button>
    <span class="grid h-8 place-items-center"><i class="block h-0.5 w-6 bg-[#d96b67]"></i></span>
    <button aria-label="History" class="grid h-[90px] place-items-center"><svg class="size-9" viewBox="0 0 36 36" fill="none" stroke="#d96b67" stroke-width="2"><circle cx="18" cy="18" r="15"/><path d="M17.500 10v8l6 6"/></svg></button>
    <button aria-label="Settings" class="grid h-[90px] place-items-center"><svg class="size-9" viewBox="0 0 36 36" fill="none" stroke="#d96b67" stroke-width="2" stroke-linejoin="round"><circle cx="18" cy="18" r="5"/><path d="M15 3h6l1 4 4 2 4-1 3 5-3 4v2l3 4-3 5-4-1-4 2-1 4h-6l-1-4-4-2-4 1-3-5 3-4v-2l-3-4 3-5 4 1 4-2Z"/></svg></button>
    <button aria-label="Wallpapers" class="mt-auto grid h-[90px] place-items-center"><svg class="size-9" viewBox="0 0 36 36" fill="none" stroke="#d96b67" stroke-width="2"><path d="M16 5H6Q3 5 3 8v20q0 3 3 3h22q3 0 3-3M3 23l8-8 14 15M16 29l7-8 7 7M22 14l12 14M25 6h3q2 0 3 3M20 3v6M14 12v4M32 13v4"/></svg></button>
    <button aria-label="More" class="grid h-[79px] place-items-center"><svg class="h-2 w-7" viewBox="0 0 28 8" fill="#d96b67"><circle cx="4" cy="4" r="3"/><circle cx="14" cy="4" r="3"/><circle cx="24" cy="4" r="3"/></svg></button>
  </aside>
  <div class="mt-[74px] w-0.5 shrink-0 self-stretch bg-gradient-to-b from-[#ee7a75] via-[#a34f50] to-[#05060b]"></div>

  <div class="flex min-w-0 flex-1 flex-col">
    <!-- tab strip -->
    <div class="relative flex h-[76px] shrink-0 items-center pt-3" id="tabs">
      <div class="absolute right-0 bottom-0 left-0 h-0.5 bg-gradient-to-r from-[#ee7a75] from-30% to-transparent to-65%"></div>
      <button aria-label="GX Corner" class="grid w-[71px] shrink-0 place-items-center"><svg class="size-8"><use href="#gx"/></svg></button>
    </div>

    <!-- address row -->
    <div class="flex h-[72px] shrink-0 items-center bg-[#0d0e1a] px-[5px]">
      <button aria-label="Back" class="grid w-[66px] place-items-center"><svg class="size-8" viewBox="0 0 32 32" fill="none" stroke="#abb0e0" stroke-width="2"><path d="M24 3L9 16l15 13"/></svg></button>
      <button aria-label="Forward" class="grid w-[66px] place-items-center"><svg class="size-8" viewBox="0 0 32 32" fill="none" stroke="#44465e" stroke-width="2"><path d="M9 3l15 13L9 29"/></svg></button>
      <button aria-label="Reload" class="grid w-[66px] place-items-center"><svg class="size-8" viewBox="0 0 32 32" fill="none" stroke="#abb0e0" stroke-width="2"><path d="M28 20A12.500 12.500 0 1 1 25 7"/><path d="M29 3v9h-9Z" fill="#abb0e0" stroke="none"/></svg></button>
      <div class="ml-[5px] flex h-[52px] min-w-0 flex-1 items-center rounded-lg bg-[#191d36] pr-[22px] pl-[38px]">
        <svg class="size-8 shrink-0"><use href="#globe"/></svg>
        <div class="ml-[34px] min-w-0 flex-1"><input aria-label="Address" class="field-sizing-content h-9 bg-[#ee7a75] text-[28px] text-black outline-none" value="localhost:8080/swagger-ui/index.html?configUrl=/v3/api-docs/swagger-config#/"></div>
        <div class="flex items-center gap-5">
          <button aria-label="Pin"><svg class="size-8" viewBox="0 0 32 32" fill="none" stroke="#abb0e0" stroke-width="2"><path d="M10 7H4v21h23v-7M18 9l6-6 6 6-5 3-1 6-3 2-9-9 2-2ZM16 16l-7 8"/></svg></button>
          <button aria-label="Snapshot"><svg class="size-8" viewBox="0 0 32 32" fill="none" stroke="#abb0e0" stroke-width="2"><path d="M4 8h6l2-4h8l2 4h6v19H4Z"/><circle cx="16" cy="17" r="5.500"/></svg></button>
          <button aria-label="Ad blocker"><svg class="size-8" viewBox="0 0 32 32"><path d="M16 2l12 5v10c0 6-5 10-12 13C9 27 4 23 4 17V7Z" fill="#ee7a75"/><path d="M10 15l5 5 8-9" fill="none" stroke="#191d36" stroke-width="2.500"/></svg></button>
          <button aria-label="My Flow"><svg class="size-8" viewBox="0 0 32 32" fill="none" stroke="#abb0e0" stroke-width="2" stroke-linejoin="round"><path d="M4 6l25 10L4 26l4-10Z"/></svg></button>
          <button aria-label="Bookmark"><svg class="size-8" viewBox="0 0 32 32" fill="none" stroke="#abb0e0" stroke-width="2"><path d="M16 28C8 21 3 17 3 11c0-7 10-9 13-2 3-7 13-5 13 2 0 6-5 10-13 17Z"/></svg></button>
        </div>
      </div>
      <div class="flex">
        <button aria-label="Grammarly" class="ml-[5px] grid w-[66px] place-items-center"><svg class="size-8" viewBox="0 0 32 32"><path d="M16 0a16 16 0 0 1 0 32H0V16A16 16 0 0 1 16 0Z" fill="#e9f1ee"/><path d="M16 2a14 14 0 0 1 0 28H2V16A14 14 0 0 1 16 2Z" fill="#2f7d68"/><path d="M22 10a8.500 8.500 0 1 0 2 8h-6" fill="none" stroke="#fff" stroke-width="3"/></svg></button>
        <button aria-label="JSON Viewer" class="grid w-16 place-items-center"><svg class="size-8" viewBox="0 0 32 32"><path d="M13 2H8Q5 2 5 6v6q0 4-4 4 4 0 4 4v6q0 4 3 4h5M19 2h5q3 0 3 4v6q0 4 4 4-4 0-4 4v6q0 4-3 4h-5" fill="none" stroke="#655fd8" stroke-width="4"/><path d="M10 5h5v11h-5zM17 5h5v11h-5z" fill="#3f8f3d"/><path d="M11 19h10l-3 8h-4Z" fill="#e8301f"/></svg></button>
        <button aria-label="Extension" class="grid w-16 place-items-center"><svg class="size-8" viewBox="0 0 32 32"><circle cx="16" cy="16" r="16" fill="#48a497"/><text x="16" y="24" text-anchor="middle" font-family="Open Sans, sans-serif" font-weight="700" font-size="29" fill="#fff">a</text></svg></button>
        <button aria-label="Extensions" class="grid w-16 place-items-center"><svg class="size-8" viewBox="0 0 32 32" fill="none" stroke="#abb0e0" stroke-width="2" stroke-linejoin="round"><path d="M16 3l12 6v14l-12 6L4 23V9ZM4 9l12 7 12-7M16 16v13"/></svg></button>
        <button aria-label="Downloads" class="grid w-[66px] place-items-center"><svg class="size-8" viewBox="0 0 32 32" fill="none" stroke="#abb0e0" stroke-width="2"><path d="M16 4v17M10 15l6 6 6-6M3 23v2q0 3 3 3h20q3 0 3-3v-2"/></svg></button>
        <button aria-label="Easy Setup" class="grid w-[66px] place-items-center"><svg class="size-8" viewBox="0 0 32 32" stroke="#abb0e0" stroke-width="2"><path d="M4 8h24M4 16h24M4 24h24M8 5v6M22 13v6M8 21v6"/></svg></button>
        <button aria-label="Profile" class="grid w-[66px] place-items-center"><svg class="size-8" viewBox="0 0 32 32" fill="none" stroke="#ee7a75" stroke-width="2"><circle cx="16" cy="9" r="4.500"/><path d="M7 27c0-14 18-14 18 0M12 27l2-3h4l2 3"/></svg></button>
      </div>
    </div>

    <!-- bookmarks -->
    <nav class="flex h-[62px] shrink-0 items-center bg-[#0d0e1a] pb-2.5 pl-7 text-[22px] whitespace-nowrap text-[#abb0e0]">
      <a href="#" class="flex w-[302px] shrink-0 items-center gap-[17px]"><svg class="size-8 shrink-0" viewBox="0 0 32 32"><path d="M2 10Q4 1 16 1q12 1 14 9 2 8-2 14-5 8-15 7-3-1-3-4l3-5-4-1-5 2q-2-3 1-6l5-4Z" fill="#f6cf47"/><path d="M4 12q7-6 11-3l-5 5M13 22q3-8 12-8M20 6q2 4 8 3M17 29q3-6 10-7" fill="none" stroke="#0d0e1a" stroke-width="2.400"/></svg>Eğitimler Geleceği Y…</a>
      <a href="#" class="flex w-[290px] shrink-0 items-center gap-[14px]"><svg class="size-8 shrink-0" viewBox="0 0 32 32" fill="none" stroke-width="3.500" stroke-linecap="round"><path d="M17 3L6 15q-4 4 0 8l5 5" stroke="#1a1a1a"/><path d="M13 9q4-3 8 1l3 3M12 27q5 4 9 0l3-3" stroke="#f0a030"/><path d="M14 18h13" stroke="#b3b3b3"/></svg>Problems - LeetCode</a>
      <a href="#" class="flex w-[298px] shrink-0 items-center gap-[17px]"><svg class="size-8 shrink-0" viewBox="0 0 32 32"><path fill="#ae2c35" d="M2 1h28v29H2z"/><path d="M8 0v23q1 5 7 5M2 7h14" fill="none" stroke="#fff" stroke-width="3"/></svg>Tureng - Türkçe İngi…</a>
      <a href="#" class="flex w-[284px] shrink-0 items-center gap-[17px]"><svg class="size-8 shrink-0"><use href="#yt"/></svg>(181) Learn Unity -…</a>
      <a href="#" class="flex w-[288px] shrink-0 items-center gap-[17px]"><svg class="size-8 shrink-0"><use href="#yt"/></svg>(181) Create 10000…</a>
      <a href="#" class="flex w-[298px] shrink-0 items-center gap-[17px]"><svg class="size-8 shrink-0" viewBox="0 0 32 32"><path fill="#e6e6e6" d="M0 0h32v32H0z"/><circle cx="16" cy="16" r="13" fill="#b5b5b5" stroke="#3b3b3b" stroke-width="4"/><circle cx="16" cy="16" r="7" fill="#d8d8d8" stroke="#777"/></svg>Requirements Analy…</a>
      <a href="#" class="flex w-[296px] shrink-0 items-center gap-[17px]"><svg class="size-8 shrink-0"><use href="#yt"/></svg>(193) Generate 10 0…</a>
      <a href="#" class="flex w-[298px] shrink-0 items-center gap-[17px]"><svg class="size-8 shrink-0" viewBox="0 0 32 32" shape-rendering="crispEdges"><path d="M5 4h8v3h5V4h9v3h3v9h-3v4h-3v4h-4v4h-5v-4h-3v-4H8v-4H3V7h2Z" fill="url(#gHeart)"/></svg>Pixilart - Free online…</a>
      <a href="#" class="flex shrink-0 items-center gap-[17px]"><svg class="size-8 shrink-0" viewBox="0 0 32 32"><path fill="#2a66b8" d="M19 6h13v20H19z"/><path fill="#fff" d="M20 11l5 4 6-5v14H20z"/><path d="M21 14l4 4 6-7" fill="none" stroke="#2a66b8" stroke-width="2"/><path fill="#2a66b8" d="M0 3l19-3v32L0 29Z"/><ellipse cx="9.500" cy="16" rx="4.500" ry="6" fill="none" stroke="#fff" stroke-width="2.800"/></svg>Outlook</a>
      <button aria-label="More bookmarks" class="mr-[50px] ml-auto"><svg class="size-5" viewBox="0 0 20 20" fill="none" stroke="#abb0e0" stroke-width="2"><path d="M2 3l7 7-7 7M11 3l7 7-7 7"/></svg></button>
    </nav>

    <!-- page -->
    <div class="min-h-0 flex-1 overflow-hidden bg-[#fafafa] font-['Liberation_Sans',Arial,sans-serif] text-[#3b4151]">
      <div class="flex h-[120px] items-center bg-[#1b1b1b] px-10">
        <a href="#" class="flex w-[600px] shrink-0 items-start gap-[14px] font-['Open_Sans',sans-serif] text-white" aria-label="Swagger">
          <svg class="size-[69px] shrink-0" viewBox="0 0 32 32"><circle cx="16" cy="16" r="16" fill="#9ce84f"/><path d="M11.800 8.500c-2.200 0-2.800.8-2.800 2.500v2.600c0 1.400-.7 2.400-2 2.400 1.300 0 2 1 2 2.400V21c0 1.700.6 2.500 2.800 2.500M20.200 8.500c2.200 0 2.800.8 2.800 2.500v2.600c0 1.400.7 2.400 2 2.400-1.300 0-2 1-2 2.400V21c0 1.700-.6 2.500-2.800 2.500" fill="none" stroke="#173647" stroke-width="1.700"/><g fill="#173647"><circle cx="12" cy="16" r="1.200"/><circle cx="16" cy="16" r="1.200"/><circle cx="20" cy="16" r="1.200"/></g></svg>
          <span class="pt-2"><span class="flex items-end text-[42px] leading-[52px]">Swagger<small class="pb-1 text-[6px] leading-3">TM</small></span>
          <span class="flex items-baseline gap-2 text-[12px] leading-5">Supported by <b class="text-[16px] font-semibold tracking-widest">SMARTBEAR</b></span></span>
        </a>
        <form class="flex min-w-0 flex-1">
          <input aria-label="API definition URL" class="h-[76px] min-w-0 flex-1 rounded-l-lg border-4 border-r-0 border-[#6b9f45] bg-white px-5 text-[32px] text-black" value="/v3/api-docs">
          <button type="button" class="h-[76px] rounded-r-lg bg-[#6f9f4f] px-[62px] text-[32px] font-bold text-white">Explore</button>
        </form>
      </div>

      <section class="px-10 pt-[99px] pb-[101px]">
        <h1 class="flex items-start text-[72px] leading-[84px] font-bold">OpenAPI definition
          <span class="mt-0.5 ml-[10px] rounded-full bg-[#7d8492] px-4 text-[28px] leading-10 text-white">v0</span>
          <span class="mt-0.5 ml-[10px] rounded-full bg-[#93bf36] px-2 text-[28px] leading-10 text-white">OAS3</span>
        </h1>
        <a href="#" class="mt-2 block text-[24px] leading-7 text-[#4990e2]">/v3/api-docs</a>
      </section>

      <section class="relative bg-white px-10 pt-[68px] pb-[59px] shadow-[0_2px_4px_rgba(0,0,0,0.15)]">
        <label for="servers" class="block text-[24px] leading-7 font-bold">Servers</label>
        <div class="relative mt-0.5 w-[680px]">
          <select id="servers" class="block h-[60px] w-full appearance-none rounded-lg border-4 border-[#41444e] bg-[#f7f7f7] pl-5 text-[28px] font-bold shadow-[0_2px_4px_rgba(0,0,0,0.25)]"><option>http://localhost:8080 - Generated server url</option></select>
          <svg class="pointer-events-none absolute top-5 right-[34px] size-5" viewBox="0 0 20 20" fill="none" stroke="#000" stroke-width="2.800" stroke-linecap="round"><path d="M2 6l8 8 8-8"/></svg>
        </div>
      </section>

      <section class="px-10 pt-10">
        <div class="flex h-[130px] items-center border-b-2 border-[#c1c3c9] pr-[52px] pl-5">
          <h2 class="text-[48px] leading-[56px] font-bold">User Controller</h2>
          <p class="ml-5 text-[28px] leading-8">User Management</p>
          <button aria-label="Collapse" class="ml-auto"><svg class="size-10" viewBox="0 0 40 40" fill="none" stroke="#000" stroke-width="3" stroke-linecap="round" stroke-linejoin="round"><path d="M4 26L20 11l16 15"/></svg></button>
        </div>
        <div class="mt-[10px] flex flex-col gap-[30px]" id="ops"></div>
      </section>
    </div>
  </div>
  <button aria-label="Search tabs" class="absolute top-[18px] -right-0.5"><svg class="size-9" viewBox="0 0 36 36" fill="none" stroke="#ee7a75" stroke-width="2.500"><circle cx="15" cy="14" r="11"/><path d="M23 22l10 11"/></svg></button>
  <div class="pointer-events-none absolute right-10 bottom-0 left-[82px] h-24 bg-gradient-to-b from-transparent to-black/12"></div>
  <div class="pointer-events-none absolute inset-0 rounded-[20px] border-2 border-white/25"></div>
</div>

<!-- dock -->
<footer class="flex h-[118px] shrink-0 items-start px-[67px] pt-1.5">
  <ul class="flex h-[102px] w-full items-center rounded-[30px] border-2 border-[#3a414b] bg-[#131a24] px-0.5 pb-1.5" id="dock"></ul>
</footer>

<script>
// Icons that carry lettering are drawn straight in place.
const lettered = {
  jay: ['0 0 32 32', `<path fill="#66bdea" d="M0 0h32v32H0z"/><path fill="#d9eef9" d="M0 30h32v2H0z"/><text x="16" y="26" text-anchor="middle" font-family="Liberation Serif, serif" font-weight="700" font-size="29" fill="#fff">J</text>`],
  ij: ['0 0 64 64', `<path d="M5-3l8-1 12 5 6 2 10 30-8 30L1 67l5-24-10-7 4-10-4-5Z" fill="url(#gIjL)"/><path d="M-3 26l10-15 10 12Z" fill="#c04be0"/><path d="M43-3l9 16 15 5-5 18 4 22-27 12-17-9 5-50 7-5Z" fill="url(#gIjR)"/><path d="M14-1l12 2 8 12H12Z" fill="#ee3f5c"/><path d="M52 13l15 5-9 12ZM40 68l12-14 8-18Z" fill="#7ad4f8" fill-opacity=".6"/><path d="M10 10h44v44H10z" fill="#120a12"/><path fill="#fff" d="M15 46h16v3H15z"/><text x="14" y="32" font-family="DejaVu Sans Mono, monospace" font-weight="700" font-size="20" fill="#fff">IJ</text>`],
  term: ['0 0 64 64', `<rect width="64" height="64" rx="15" fill="url(#gRim)"/><rect x="2.500" y="2.500" width="59" height="59" rx="13" fill="#000"/><rect x="7" y="7" width="50" height="50" rx="8" fill="#111c1f"/><text x="10" y="22" font-family="DejaVu Sans Mono, monospace" font-size="13" fill="#3fe13b">$</text><path d="M21 10h6v14h-6z" fill="#2a6b2a"/>`],
  zoomapp: ['0 0 64 64', `<rect width="64" height="64" rx="15" fill="url(#gZoom)"/><text x="32" y="38" text-anchor="middle" font-family="Inter, sans-serif" font-weight="600" font-size="17" fill="#fff">zoom</text>`],
  canva: ['0 0 64 64', `<rect width="64" height="64" rx="15" fill="url(#gCanva)"/><text x="32" y="38" text-anchor="middle" font-family="Liberation Serif, serif" font-style="italic" font-weight="700" font-size="21" fill="#fff">Canva</text>`],
  cal: ['0 0 64 64', `<rect width="64" height="64" rx="15" fill="#f8f7f6"/><path fill="#e35b51" d="M0 20v-5A15 15 0 0 1 15 0h34a15 15 0 0 1 15 15v5Z"/><text x="32" y="16" text-anchor="middle" font-family="Inter, sans-serif" font-weight="600" font-size="14" fill="#fff">MAR</text><text x="31" y="54" text-anchor="middle" font-family="Inter, sans-serif" font-weight="300" font-size="38" fill="#2b2b2b">17</text>`],
};
const icon = (id, cls) => lettered[id]
  ? `<svg class="${cls}" viewBox="${lettered[id][0]}" overflow="visible">${lettered[id][1]}</svg>`
  : `<svg class="${cls}" overflow="visible"><use href="#${id}"/></svg>`;

const before = ['sun','burst','yt','jay','yt','yt','gpt','shell','gpt','tri'];
const after = ['swag','earth','sonar','medium','github','medium','leaf','github','so','so','github','google','so','whale','google','so','jb','so','google','so','jira','so','google','so','sun','google','drive'];
const tab = id => `<button aria-label="${id}" class="grid w-[66px] shrink-0 place-items-center">${icon(id, 'size-8 fill-white')}</button>`;
const active = `<button class="relative -mt-3 flex h-16 w-32 shrink-0 items-center gap-1.5 pt-3 pl-[13px] text-left text-[23px] text-white">
  <svg class="absolute top-0 left-0 h-16 w-32" viewBox="0 0 128 64"><path d="M0 64V61Q1 61 1 58V16L13 2H124Q126 2 126 4V58Q126 61 128 61V64Z" fill="#0d0e1a"/><path d="M0 62Q1 61 1 58V16L13 2H124Q126 2 126 4V58Q126 61 128 62" fill="none" stroke="#ee7a75" stroke-width="2"/></svg>
  ${icon('swag', 'relative size-8 shrink-0')}
  <span class="relative w-[64px] overflow-hidden whitespace-nowrap [mask-image:linear-gradient(90deg,#000_55%,transparent_95%)]">Swagg</span></button>`;
document.getElementById('tabs').insertAdjacentHTML('beforeend',
  before.map(tab).join('') + active + after.map(tab).join('') +
  `<button aria-label="New tab" class="grid w-[62px] place-items-center"><svg class="size-6" viewBox="0 0 24 24" stroke="#ee7a75" stroke-width="2"><path d="M12 0v24M0 12h24"/></svg></button>`);

const look = {
  GET: ['border-[#74adf8] bg-[#ebf3fb]', 'bg-[#74adf8]'],
  POST: ['border-[#70c995] bg-[#ebf5f0]', 'bg-[#70c995]'],
  DELETE: ['border-[#e64e47] bg-[#f8e7e7]', 'bg-[#e64e47]'],
};
const ops = [['GET','/api/v1/users'],['POST','/api/v1/users'],['GET','/api/v1/users/{id}'],['POST','/api/v1/users/{id}'],['DELETE','/api/v1/users/{id}'],['POST','/api/v1/users/user-status/{id}']];
document.getElementById('ops').innerHTML = ops.map(([m, p]) => `
  <button class="flex h-20 items-center rounded-lg border-2 px-[10px] text-left shadow-[0_0_6px_rgba(0,0,0,0.19)] ${look[m][0]}">
    <span class="h-14 w-40 rounded-md text-center text-[28px] leading-[56px] font-bold text-white text-shadow-[0_2px_0_rgba(0,0,0,0.1)] ${look[m][1]}">${m}</span>
    <span class="ml-5 font-['DejaVu_Sans_Mono',monospace] text-[32px] font-bold">${p}</span>
    <svg class="ml-auto size-10" viewBox="0 0 40 40" fill="none" stroke="#000" stroke-width="3" stroke-linecap="round" stroke-linejoin="round"><path d="M4 13l16 15 16-15"/></svg>
  </button>`).join('');

const dock = ['finder*','source','quest','vscode','pg','arduino','ij','term*','activity','spotify','zoomapp','linear','discord','opera*','postman','mail','canva','launch','maps','photos','preview*','cal','remind','textedit*','notes','prefs','anchor','vlc','ij*','docker*','|','doc','trash'];
document.getElementById('dock').innerHTML = dock.map(d => {
  if (d === '|') return '<li class="flex flex-1 justify-center"><i class="block h-[74px] w-0.5 bg-[#4a515b]"></i></li>';
  const run = d.endsWith('*'), id = d.replace('*', '');
  return `<li class="relative flex h-[68px] flex-2 justify-center"><button aria-label="${id}" class="grid place-items-center">${icon(id, 'size-16 overflow-visible')}</button>${run ? '<i class="absolute top-[76px] left-1/2 -ml-1 size-2 rounded-full bg-[#8e959f]"></i>' : ''}</li>`;
}).join('');
</script>
</body>
</html>
